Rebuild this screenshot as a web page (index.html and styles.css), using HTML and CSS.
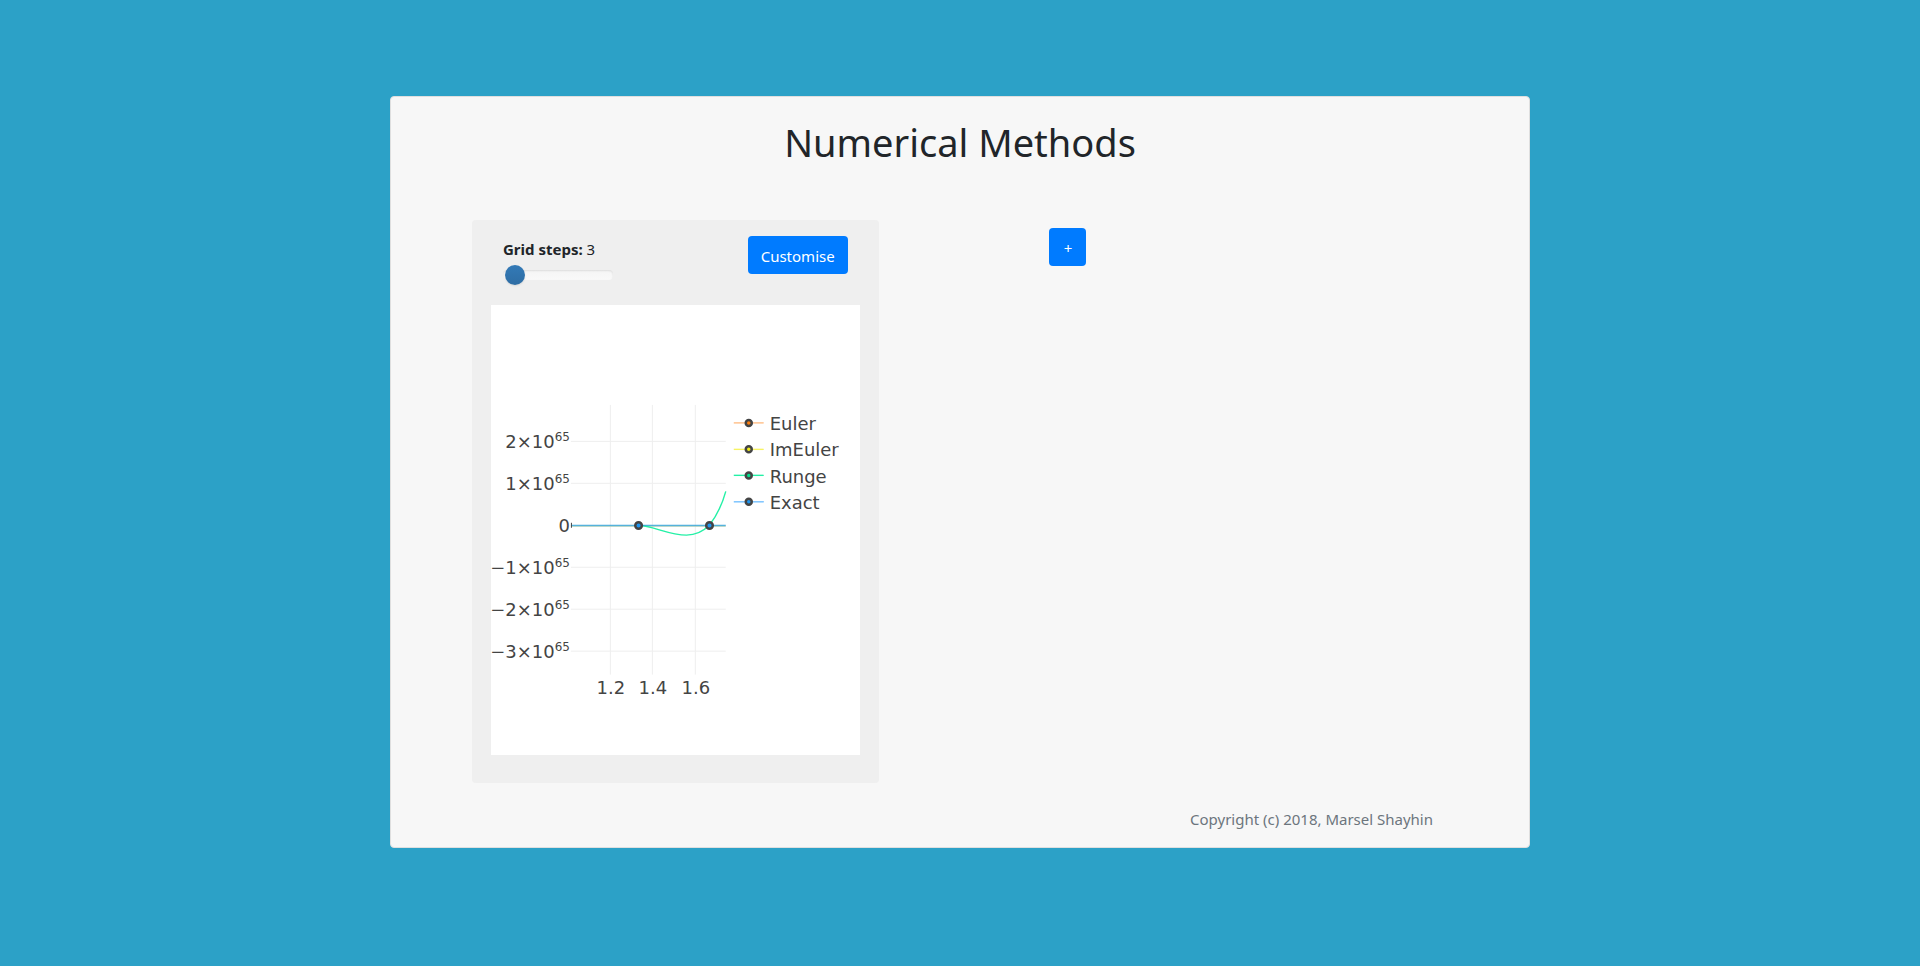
FILE: index.html
```html
<!DOCTYPE html>
<html lang="en">
<head>
  <meta charset="utf-8">
  <meta name="viewport" content="width=device-width, initial-scale=1">
  <title>Numerical Methods</title>
  <link rel="stylesheet" href="styles.css">
</head>
<body>
  <main class="panel">
    <h1 class="title">Numerical Methods</h1>
    <div class="board">
      <section class="card">
        <div class="controls">
          <div class="steps">
            <label class="steps-label" for="steps"><b>Grid steps:</b> 3</label>
            <input class="slider" id="steps" type="range" min="3" max="100" value="3">
          </div>
          <button class="btn" type="button">Customise</button>
        </div>
        <svg class="plot" viewBox="0 0 369 450" role="img" aria-label="Solution plot">
          <g class="grid">
            <path d="M119.500 100V370M161.500 100V370M204.500 100V370"/>
            <path d="M80 136.500H235M80 178.500H235M80 262.500H235M80 304.500H235M80 346.500H235"/>
          </g>
          <path class="zero" d="M80 221.500H235"/>
          <path class="line runge" d="M147.500 220.500C162 221 178 230.300 195.700 230.300C205 230.300 213 226 218.500 220.500C226 211 231 201 235 186.500"/>
          <path class="axis-line" d="M80 220.500H235"/>
          <path class="tick" d="M80.500 218V223"/>
          <g class="marker exact">
            <circle cx="147.700" cy="220.700" r="3.300"/>
            <circle cx="218.700" cy="220.700" r="3.300"/>
          </g>
          <g class="label y">
            <text x="79" y="143">2×10<tspan class="sup" dy="-7">65</tspan></text>
            <text x="79" y="185">1×10<tspan class="sup" dy="-7">65</tspan></text>
            <text x="79" y="227">0</text>
            <text x="79" y="269">−1×10<tspan class="sup" dy="-7">65</tspan></text>
            <text x="79" y="311">−2×10<tspan class="sup" dy="-7">65</tspan></text>
            <text x="79" y="353">−3×10<tspan class="sup" dy="-7">65</tspan></text>
          </g>
          <g class="label x">
            <text x="120" y="389">1.2</text>
            <text x="162" y="389">1.4</text>
            <text x="205" y="389">1.6</text>
          </g>
          <g class="legend">
            <path class="line euler" d="M243 118H273"/>
            <path class="line imeuler" d="M243 144.500H273"/>
            <path class="line runge" d="M243 170.500H273"/>
            <path class="line exact" d="M243 197H273"/>
            <g class="marker">
              <circle class="euler" cx="258" cy="118" r="3"/>
              <circle class="imeuler" cx="258" cy="144.300" r="3"/>
              <circle class="runge" cx="258" cy="170.700" r="3"/>
              <circle class="exact" cx="258" cy="197" r="3"/>
            </g>
            <g class="label">
              <text x="279" y="125">Euler</text>
              <text x="279" y="151">ImEuler</text>
              <text x="279" y="178">Runge</text>
              <text x="279" y="204">Exact</text>
            </g>
          </g>
        </svg>
      </section>
      <div class="add">
        <button class="btn" type="button" aria-label="Add plot">+</button>
      </div>
    </div>
    <footer class="footer">Copyright (c) 2018, Marsel Shayhin</footer>
  </main>
</body>
</html>
```
FILE: styles.css
```css
* {
  box-sizing: border-box;
}

body {
  margin: 0;
  padding: 96px 16px;
  background: #2ca1c7;
  color: #212529;
  font: 16px/24px "Segoe UI", "Noto Sans", sans-serif;
}

.panel {
  max-width: 1140px;
  margin: 0 auto;
  padding: 21px 81px 16px;
  background: #f7f7f7;
  border: 1px solid #dfdfdf;
  border-radius: 4px;
}

.title {
  margin: 0 0 54px;
  font-size: 38px;
  line-height: 48px;
  font-weight: 400;
  text-align: center;
}

.board {
  display: grid;
  grid-template-columns: 5fr 7fr;
  align-items: start;
}

.card {
  padding: 16px 19px 28px;
  background: #efefef;
  border-radius: 4px;
}

.controls {
  display: flex;
  justify-content: space-between;
  align-items: flex-start;
  padding: 0 12px 20px;
}

.steps {
  display: flex;
  flex-direction: column;
  gap: 4px;
  padding-top: 1px;
}

.steps-label {
  font-size: 15px;
}

.slider {
  appearance: none;
  width: 110px;
  height: 10px;
  margin: 5px 0;
  padding: 0 2px;
  background: linear-gradient(#f5f5f5, #f9f9f9);
  border-radius: 4px;
  box-shadow: inset 0 1px 2px rgba(0, 0, 0, 0.1);
}

.slider::-webkit-slider-thumb {
  appearance: none;
  width: 20px;
  height: 20px;
  border-radius: 50%;
  background: linear-gradient(#337ab7, #2e6da4);
  box-shadow: 0 1px 2px rgba(0, 0, 0, 0.1);
}

.btn {
  min-width: 37px;
  height: 38px;
  padding: 8px 13px 6px;
  border: 0;
  border-radius: 4px;
  background: #007bff;
  color: #fff;
  font: inherit;
  font-size: 15px;
}

.plot {
  display: block;
  width: 100%;
  background: #fff;
}

.add {
  padding: 8px 0 0 30%;
}

.footer {
  padding: 24px 15px 0;
  color: #6c757d;
  font-size: 15px;
  text-align: right;
}

.label {
  fill: #444;
  font: 18px Verdana, "DejaVu Sans", sans-serif;
}

.label.y {
  text-anchor: end;
}

.label.x {
  text-anchor: middle;
}

.sup {
  font-size: 12px;
}

.grid {
  stroke: #eee;
}

.line {
  fill: none;
  stroke-width: 1.4;
}

.axis-line {
  stroke: #2b9fd6;
}

.zero {
  stroke: #a9cdbb;
}

.tick {
  stroke: #444;
}

.line.euler {
  stroke: #ffbe86;
}

.line.imeuler {
  stroke: #f7f363;
}

.line.runge {
  stroke: #24f0a6;
}

.line.exact {
  stroke: #74c0ff;
}

.marker {
  stroke: #444;
  stroke-width: 2.5;
}

.marker .euler {
  fill: #ff7f0e;
}

.marker .imeuler {
  fill: #f0ec1c;
}

.marker .runge {
  fill: #00e08c;
}

.marker.exact,
.marker .exact {
  fill: #1f95f0;
}
```
